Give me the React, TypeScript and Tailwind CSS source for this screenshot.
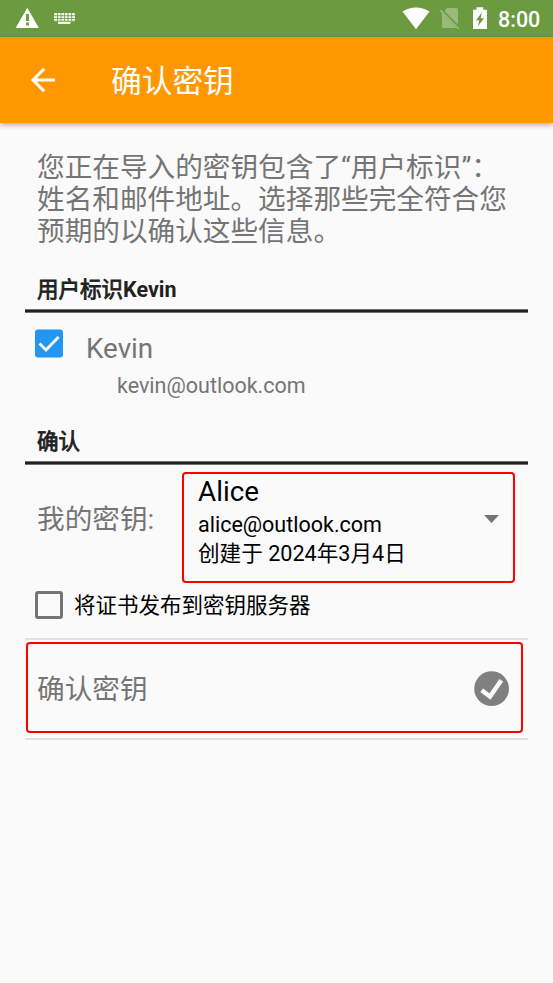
import type { ReactNode } from "react";

function StatusBar() {
  return (
    <div className="flex h-[37px] items-start bg-[#6c9a3e] text-white">
      <svg className="mt-[7px] ml-[15px] h-[22px] w-[25px]" viewBox="0 0 25 22">
        <path d="M12.3.8 23.900 21H.6Z" fill="#fff" />
        <path d="M11 7h2.900v6.900H11zM11 15.600h2.900v2.900H11z" fill="#6c9a3e" />
      </svg>
      <svg className="mt-[12px] ml-[13px] h-[13px] w-[24px]" viewBox="0 0 24 13">
        <rect x="1" y="1" width="21" height="8.4" rx="1" fill="#fff" fillOpacity=".92" />
        <rect x="5" y="9.4" width="12.5" height="2.6" rx=".5" fill="#fff" fillOpacity=".92" />
        <path
          d="M1 3.7h21M1 6.5h21M1 9.2h21M4.5 1v8.4M8 1v8.4M11.5 1v8.4M15 1v8.4M18.6 1v8.4"
          stroke="#6c9a3e"
          strokeWidth=".8"
        />
      </svg>
      <svg className="mt-[6px] ml-[325px] h-[24px] w-[28px]" viewBox="0 0 28 24">
        <path d="M.5 5.600Q14-2.600 27.500 5.600L14 23.300Z" fill="#fff" />
      </svg>
      <svg className="mt-[7px] ml-[9px] h-[24px] w-[21px]" viewBox="0 0 21 24">
        <path d="M8 1h9.500q1.500 0 1.500 1.500V17.600L5.400 4.200ZM3 5.800 17.300 21H4.500Q3 21 3 19.500Z" fill="#9bb97c" />
        <path d="M1.200 3.200 19.800 22" stroke="#9bb97c" strokeWidth="1.700" />
      </svg>
      <svg className="mt-[7px] ml-[12px] h-[23px] w-[16px]" viewBox="0 0 16 23">
        <path d="M4.500.3h6.800v2.400H15V22H1V2.700h3.500Z" fill="#fff" />
        <path d="M9.800 5.500 4 13.200h3.200L6 19.200l6-8H8.700Z" fill="#6c9a3e" />
      </svg>
      <span className="mt-[7px] ml-[10px] text-[21.5px] leading-[26px] font-medium">8:00</span>
    </div>
  );
}

function AppBar() {
  return (
    <header className="flex h-[86px] items-center bg-[#ff9800] text-white shadow-[0_2px_5px_rgba(0,0,0,0.32)]">
      <svg className="ml-[30px] h-[26px] w-[27px]" viewBox="0 0 27 26" fill="none" stroke="#fff" strokeWidth="3">
        <path d="M25 13H3M14.200 1.800 3 13l11.200 11.200" />
      </svg>
      <h1 className="mt-[3px] ml-[54px] text-[30.7px] leading-[40px] font-normal">确认密钥</h1>
    </header>
  );
}

function SectionTitle({ children }: { children: ReactNode }) {
  return (
    <div className="h-[37px]">
      <h2 className="h-[33px] pl-[12px] text-[21.5px] leading-[28px] font-bold text-[#212121]">{children}</h2>
      <div className="h-[4px] border-t border-b border-t-[#6f6f6f] border-b-[#6f6f6f] bg-[#212121]" />
    </div>
  );
}

function SyntheticBold({ children }: { children: ReactNode }) {
  return <span className="font-normal [-webkit-text-stroke:0.8px_#212121]">{children}</span>;
}

export default function App() {
  return (
    <div className="h-[983px] w-[553px] overflow-hidden bg-[#fafafa] font-['Roboto','Noto_Sans_CJK_SC',sans-serif] text-[#757575]">
      <StatusBar />
      <AppBar />
      <main className="mr-[25px] ml-[25px] pt-[29px]">
        <p className="h-[124px] pl-[12px] text-[27.65px] leading-[32px] whitespace-nowrap">
          您正在导入的密钥包含了“用户标识”：
          <br />
          姓名和邮件地址。选择那些完全符合您
          <br />
          预期的以确认这些信息。
        </p>

        <SectionTitle>
          <SyntheticBold>用户标识</SyntheticBold>Kevin
        </SectionTitle>
        <div className="flex h-[115px] pl-[10px]">
          <svg className="mt-[16px] h-[29px] w-[28px]" viewBox="0 0 28 29">
            <rect y=".5" width="28" height="28" rx="3" fill="#2196f3" />
            <path d="m4.500 14.500 6.500 6.500L23.600 8" fill="none" stroke="#fff" strokeWidth="2.800" />
          </svg>
          <div className="ml-[23px]">
            <div className="mt-[19px] text-[27.8px] leading-[34px]">Kevin</div>
            <div className="mt-[6px] ml-[31px] text-[21.5px] leading-[28px]">kevin@outlook.com</div>
          </div>
        </div>

        <SectionTitle>
          <SyntheticBold>确认</SyntheticBold>
        </SectionTitle>
        <div className="mt-[7px] flex h-[111px]">
          <span className="mt-[30px] w-[157px] pl-[12px] text-[27.65px] leading-[36px]">我的密钥:</span>
          <div className="flex w-[333px] rounded-[4px] border-2 border-[#ff0000] pl-[14px] text-black">
            <div className="w-[286px]">
              <div className="text-[27.8px] leading-[35px]">Alice</div>
              <div className="mt-[1px] text-[21.5px] leading-[29px]">alice@outlook.com</div>
              <div className="text-[21.6px] leading-[29px]">创建于 2024年3月4日</div>
            </div>
            <svg className="mt-[41px] h-[8px] w-[15px]" viewBox="0 0 15 8">
              <path d="M0 0h15L7.500 8Z" fill="#757575" />
            </svg>
          </div>
        </div>

        <div className="flex h-[57px] items-start border-b-2 border-[#e0e0e0] pl-[10px]">
          <span className="mt-[8px] h-[28px] w-[28px] rounded-[3px] border-[3px] border-[#757575]" />
          <span className="mt-[9px] ml-[11px] text-[21.5px] leading-[28px] text-black">将证书发布到密钥服务器</span>
        </div>

        <div className="border-b-2 border-[#e0e0e0] pt-[2px] pb-[5px]">
          <div className="ml-[1px] flex h-[91px] w-[497px] items-center justify-between rounded-[4px] border-2 border-[#ff0000] pr-[11px] pl-[9px]">
            <span className="mt-[4px] text-[27.65px] leading-[36px]">确认密钥</span>
            <svg className="mt-[3px] h-[36px] w-[36px]" viewBox="0 0 36 36">
              <circle cx="17.600" cy="17.700" r="17.400" fill="#808080" />
              <path d="m7.700 19.200 8.300 6.300L27.300 9.200" fill="none" stroke="#fafafa" strokeWidth="4.400" />
            </svg>
          </div>
        </div>
      </main>
    </div>
  );
}
